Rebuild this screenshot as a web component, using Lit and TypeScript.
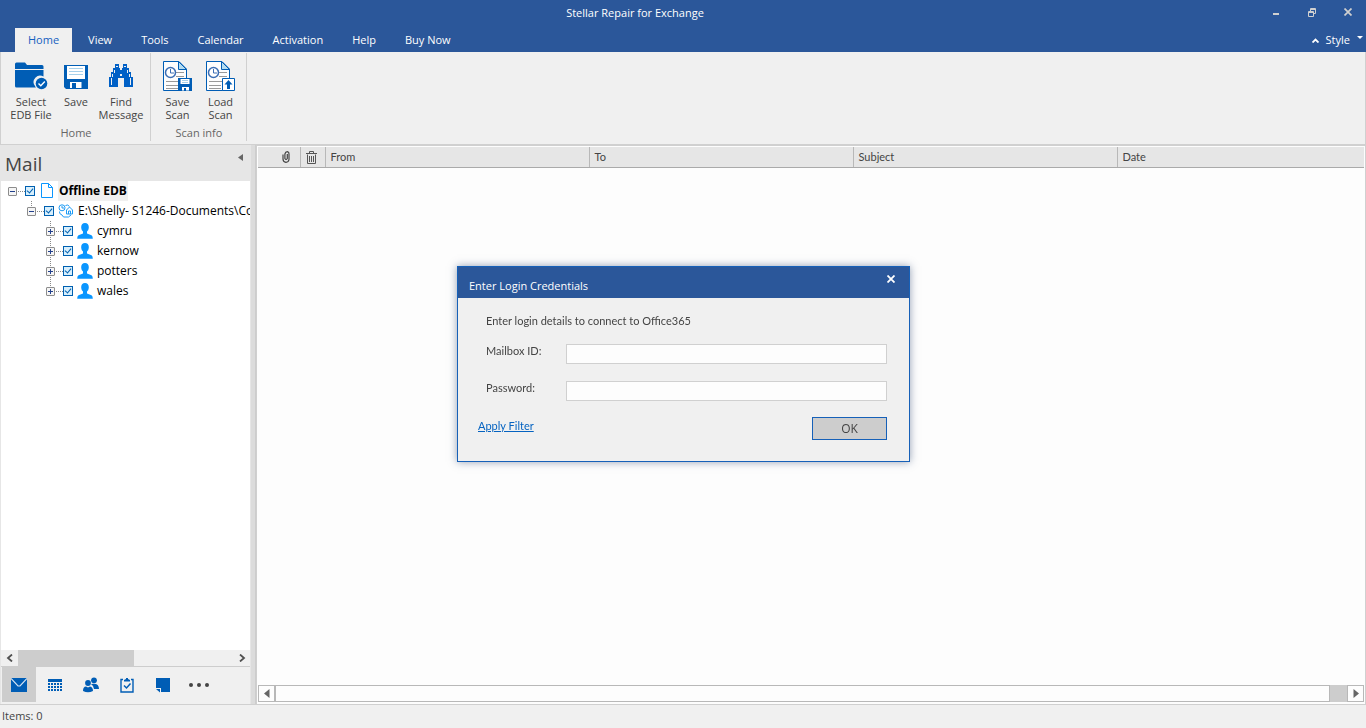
import { LitElement, html, css, svg, nothing, type TemplateResult } from "lit";
import { customElement, property, state } from "lit/decorators.js";
import { classMap } from "lit/directives/class-map.js";

const folderIcon = html`<svg width="34" height="30" viewBox="0 0 34 30" aria-hidden="true">
  <path fill="#005db5" d="M1 3q0-1.500 1.500-1.500H11L13 4H28q1.500 0 1.500 1.500V8H1zM1 9H29.500V15.500A6.500 6.500 0 0 0 21 25q.500 1 1 1.500H2.500Q1 26.500 1 25z"/>
  <circle cx="27.500" cy="22.500" r="5.800" fill="#005db5"/>
  <path d="M24.500 22.500l2.300 2.300 4-4.300" fill="none" stroke="#fff" stroke-width="1.400"/></svg>`;

const saveIcon = html`<svg width="24" height="26" viewBox="0 -2 24 26" aria-hidden="true">
  <path fill="#005db5" d="M0 0H24V24H2L0 22z"/>
  <path fill="#fff" d="M3 1H21V14H3zM6 17H17.500V23H12V18H8V23H6z"/>
  <path stroke="#a6d0ea" d="M5 3.500H19M5 6.500H19M5 9.500H19"/></svg>`;

const binocularsIcon = html`<svg width="24" height="24" viewBox="0 0 24 24" shape-rendering="crispEdges" aria-hidden="true">
  <path fill="#0060c6" d="M6 0H10V4H11V6H13V4H14V0H18V4H20V8H22V13H24V23H15V14H9V23H0V13H2V8H4V4H6z"/>
  <path fill="#f0f0f0" d="M7 2H9V3H7zM15 2H17V3H15zM5 6H6V9H5zM18 6H19V9H18zM3 10H4V13H3zM20 10H21V13H20zM11 10H13V12H11zM2 14H3V21H2zM21 14H22V21H21z"/></svg>`;

const scanIcon = (badge: unknown) => html`<svg width="31" height="31" viewBox="0 0 31 31" aria-hidden="true">
  <path fill="#fdfdfd" stroke="#005db5" d="M1.500.500H17L24.500 8V29.500H1.500z"/>
  <path fill="#b4dcf0" stroke="#005db5" d="M16.500.500V8.500H24.500z"/>
  <path stroke="#999" d="M14 11.500H22M14 15.500H22M4 20.500H22M4 24.500H16M4 27.500H16"/>
  <circle cx="8.500" cy="11.500" r="5" fill="#fff" stroke="#3c6eb4" stroke-width="1.500"/>
  <path fill="none" stroke="#3c6eb4" d="M8.500 8V12H12"/>${badge}</svg>`;

const saveBadge = svg`<path fill="#005db5" d="M16 17H30V30H17L16 29z"/>
  <path fill="#fff" d="M18.500 18H27.500V23H18.500zM20 26H27V29.500H24V27H22V29.500H20z"/>
  <path stroke="#a6d0ea" d="M20 19.500H26M20 21.500H26"/>`;
const loadBadge = svg`<path fill="#fff" stroke="#005db5" d="M17.500 17.500H29.500V29.500H17.500z"/>
  <path fill="#005db5" d="M23.500 19L27.500 23.500H25V28H22V23.500H19.500z"/>`;

const pageIcon = html`<svg width="14" height="16" viewBox="0 0 14 16" aria-hidden="true">
  <path d="M1.500.500H8.500L12.500 4.500V14.500H1.500zM8.500.500V4.500H12.500" fill="#fff" stroke="#0a96ff"/></svg>`;

const databaseIcon = html`<svg width="16" height="14" viewBox="0 0 16 14" aria-hidden="true">
  <g fill="none" stroke="#1e9bf5"><circle cx="4" cy="3.800" r="3"/><path d="M4 2V4H6M7.500 1.500q2.500-1.500 4 1M1.500 7.500Q1 10 4 11L5.500 13H10.500L13 11"/>
  <path d="M8.500 6L11.500 3 14.500 6V10H8.500zM10.500 10V7H12.500V10"/></g></svg>`;

const personIcon = html`<svg width="16" height="16" viewBox="0 0 16 16" aria-hidden="true">
  <path fill="#0a96ff" d="M8 0C10.500 0 12 1.800 11.800 4.500 11.700 6.500 11 7.500 10 8.500V10.500L14.500 12.300Q15.800 13 15.800 15.800H.200Q.200 13 1.500 12.300L6 10.500V8.500C5 7.500 4.300 6.500 4.200 4.500 4 1.800 5.500 0 8 0z"/></svg>`;

const navIcons: { name: string; icon: TemplateResult }[] = [
  { name: "Mail", icon: html`<svg width="16" height="16" viewBox="0 0 16 16" aria-hidden="true"><path fill="#005db5" d="M0 1H16V15H0z"/><path fill="none" stroke="#d8e6f4" stroke-width="1.100" d="M0 1.500L7 9H9L16 1.500"/></svg>` },
  { name: "Calendar", icon: html`<svg width="16" height="16" viewBox="0 0 16 16" aria-hidden="true"><path fill="#005db5" d="M1 2H15V5H1zM1 6H15V14H1z"/><path stroke="#f0f0f0" d="M3.500 6V14M6.500 6V14M9.500 6V14M12.500 6V14M1 8.500H15M1 11.500H15"/></svg>` },
  { name: "People", icon: html`<svg width="18" height="16" viewBox="0 0 18 16" aria-hidden="true"><g fill="#005db5"><circle cx="12" cy="3.300" r="2.900"/><path d="M9 7Q17 5.500 17 12H12Q11.500 8.500 9 7z"/><circle cx="6" cy="6" r="2.900"/><path d="M1 14Q1 9.500 4 9.500L6 10.500 8 9.500Q11 10 11 14Q6 16.500 1 14z"/></g></svg>` },
  { name: "Tasks", icon: html`<svg width="16" height="16" viewBox="0 0 16 16" aria-hidden="true"><path fill="none" stroke="#005db5" stroke-width="1.400" d="M4 2.500H2V15H14V2.500H12"/><path fill="#005db5" d="M5 4.500V3L7 2V1H9V2L11 3V4.500z"/><path fill="none" stroke="#005db5" stroke-width="1.500" d="M5 8.500L7.500 11 11.500 6.500"/></svg>` },
  { name: "Notes", icon: html`<svg width="16" height="16" viewBox="0 0 16 16" aria-hidden="true"><path fill="#005db5" d="M1 1H15V15H6V11H1z"/><path fill="#005db5" d="M1 12H5V15.500z"/></svg>` },
  { name: "More", icon: html`<svg width="22" height="16" viewBox="0 0 22 16" aria-hidden="true"><g fill="#444"><circle cx="3" cy="8" r="2"/><circle cx="11" cy="8" r="2"/><circle cx="19" cy="8" r="2"/></g></svg>` },
];

const clipIcon = html`<svg width="8" height="12" viewBox="0 0 8 12" role="img" aria-label="Attachment"><path fill="none" stroke="#444" stroke-width="1.200" d="M5.300 3V7.500Q4 9.500 2.900 7.500V3Q3.500.600 5.300.600 7.200 1 7 3V8.500Q6.500 11.300 4 11.300 1 11 1 8V3.500"/></svg>`;
const trashIcon = html`<svg width="12" height="13" viewBox="0 0 12 13" role="img" aria-label="Deleted"><path fill="none" stroke="#555" d="M1.500 3.500V12.500H9.500V3.500M0 2.500H11M3.500 2.500V.500H7.500V2.500M3.500 5V11M5.500 5V11M7.500 5V11"/></svg>`;

interface Node {
  label: string;
  icon: TemplateResult;
  open?: boolean;
  children?: Node[];
}

@customElement("ribbon-group")
class RibbonGroup extends LitElement {
  @property() caption = "";
  static styles = css`
    :host { display: flex; flex-direction: column; border-right: 1px solid #d0d0d0; padding: 4px 4px 0 5px; }
    .row { display: flex; flex: 1; justify-content: center; }
    .caption { text-align: center; color: #666; line-height: 16px; }
  `;
  render() {
    return html`<div class="row"><slot></slot></div><div class="caption">${this.caption}</div>`;
  }
}

@customElement("h-scroll")
class HScroll extends LitElement {
  @property({ type: Boolean, reflect: true }) framed = false;
  static styles = css`
    :host { display: flex; height: 16px; background: #f0f0f0; }
    button { border: 0; padding: 0; background: none; width: 17px; display: grid; place-items: center; }
    .track { flex: 1; display: flex; }
    .thumb { width: 116px; background: #cdcdcd; }
    :host([framed]) { background: #cdcdcd; height: 17px; }
    :host([framed]) button { border: 1px solid #b8b8b8; background: #fdfdfd; }
    :host([framed]) .track { padding-right: 17px; }
    :host([framed]) .thumb { flex: 1; background: #fdfdfd; border: 1px solid #b8b8b8; }
  `;
  render() {
    const arrow = (left: boolean) => this.framed
      ? html`<svg width="6" height="9" viewBox="0 0 6 9" aria-hidden="true"><path fill="#666" d=${left ? "M5.500 0V9L0 4.500z" : "M.500 0V9L6 4.500z"} /></svg>`
      : html`<svg width="8" height="8" viewBox="0 0 8 8" aria-hidden="true"><path fill="none" stroke="#505050" stroke-width="1.800" d=${left ? "M6 .500L2 4 6 7.500" : "M2 .500L6 4 2 7.500"} /></svg>`;
    return html`<button aria-label="Scroll left">${arrow(true)}</button>
      <div class="track"><div class="thumb"></div></div>
      <button aria-label="Scroll right">${arrow(false)}</button>`;
  }
}

@customElement("login-dialog")
class LoginDialog extends LitElement {
  static styles = css`
    :host { display: block; width: 451px; border: 1px solid #1660b8; background: #f0f0f0; color: #444;
      box-shadow: 0 0 8px rgba(43, 67, 110, 0.5); font: 12px/16px "Open Sans", sans-serif; }
    header { display: flex; justify-content: space-between; height: 31px; background: #2b579a; color: #fff; font-size: 11px; }
    h2 { margin: 0; padding: 11px 0 0 11px; font-size: 11px; font-weight: 400; line-height: 16px; }
    .close { border: 0; padding: 0; margin: 4px 10px 0 0; width: 16px; height: 16px; background: none; display: grid; place-items: center; }
    form { padding: 15px 22px 21px 20px; }
    .text { font-family: Lato, sans-serif; font-size: 11px; }
    p { margin: 0 0 15px 8px; line-height: 16px; }
    .field { display: flex; align-items: flex-start; margin: 0 0 17px 8px; }
    .field + .field { margin-bottom: 16px; }
    label { width: 80px; line-height: 14px; }
    input { flex: 1; min-width: 0; box-sizing: border-box; height: 20px; border: 1px solid #d0d0d0; background: #fdfdfd; padding: 0 4px; font: inherit; }
    .foot { display: flex; justify-content: space-between; align-items: flex-start; }
    a { color: #0563c1; line-height: 18px; }
    .ok { width: 75px; height: 23px; padding: 0; border: 1px solid #1660b8; background: #cdcdcd; color: #444; font: 12px "Open Sans", sans-serif; }
  `;
  render() {
    return html`<section role="dialog" aria-labelledby="title">
      <header><h2 id="title">Enter Login Credentials</h2>
        <button class="close" aria-label="Close"><svg width="8" height="8" viewBox="0 0 8 8" aria-hidden="true"><path stroke="#fff" stroke-width="1.800" d="M.500.500L7.500 7.500M7.500.500L.500 7.500"/></svg></button>
      </header>
      <form @submit=${(e: Event) => e.preventDefault()}>
        <p class="text">Enter login details to connect to Office365</p>
        <div class="field"><label class="text" for="mailbox">Mailbox ID:</label><input id="mailbox" type="text"></div>
        <div class="field"><label class="text" for="password">Password:</label><input id="password" type="password"></div>
        <div class="foot"><a class="text" href="#filter">Apply Filter</a><button class="ok">OK</button></div>
      </form>
    </section>`;
  }
}

@customElement("app-root")
class AppRoot extends LitElement {
  @state() private tab = "Home";

  private tabs = ["Home", "View", "Tools", "Calendar", "Activation", "Help", "Buy Now"];
  private tree: Node = {
    label: "Offline EDB", icon: pageIcon, open: true,
    children: [{
      label: "E:\\Shelly- S1246-Documents\\Co", icon: databaseIcon, open: true,
      children: ["cymru", "kernow", "potters", "wales"].map((label) => ({ label, icon: personIcon })),
    }],
  };

  static styles = css`
    :host { display: flex; flex-direction: column; height: 100vh; overflow: hidden; background: #f0f0f0; color: #444; font: 11px/16px "Open Sans", sans-serif; }
    button { font: inherit; color: inherit; border: 0; padding: 0; background: none; }
    .top { background: #2b579a; color: #fff; height: 52px; display: flex; flex-direction: column; }
    .title { display: grid; grid-template-columns: 1fr auto 1fr; height: 28px; }
    h1 { margin: 0; padding: 5px 0 0; font-size: 11px; font-weight: 400; line-height: 16px; grid-column: 2; margin-right: 96px; }
    .window { justify-self: end; display: flex; }
    .window button { width: 36px; height: 24px; display: grid; place-items: center; }
    .tabs { display: flex; padding-left: 15px; flex: 1; gap: 3px; }
    .tab { padding: 0 13px; }
    .tab.active { background: #f0f0f0; color: #1660c0; }
    .style { margin-left: auto; padding-right: 3px; display: flex; gap: 7px; align-items: center; }
    .ribbon { display: flex; height: 88px; padding: 1px 0 3px; border: 1px solid #d0d0d0; border-top: 0; }
    .tool { display: flex; flex-direction: column; align-items: center; line-height: 13px; width: 43px; }
    .tool.wide { width: 50px; }
    .tool.save { width: 40px; }
    .pic { height: 38px; display: grid; place-items: center; }
    .main { flex: 1; min-height: 0; display: flex; background: #e6e6e6; border-bottom: 1px solid #d0d0d0; }
    .side { width: 249px; flex: none; display: flex; flex-direction: column; border-left: 1px solid #e6e6e6; }
    .mail { height: 36px; flex: none; display: flex; justify-content: space-between; padding: 0 7px 0 4px; }
    h2 { margin: 0; font-size: 19px; line-height: 38px; font-weight: 400; }
    .collapse { height: 24px; }
    .tree { flex: 1; background: #fff; overflow: hidden; padding-left: 7px; color: #000; font-size: 12px; }
    ul { list-style: none; margin: 0; padding: 0; }
    ul ul { padding-left: 19px; }
    ul ul > li { background: repeating-linear-gradient(#888 0 1px, transparent 1px 2px) 4px 0 / 1px 100% no-repeat; }
    ul ul > li:last-child { background-size: 1px 10px; }
    .node { display: flex; align-items: center; height: 20px; white-space: nowrap; }
    .toggle { width: 9px; height: 9px; flex: none; box-sizing: border-box; border: 1px solid #8c8c8c; border-radius: 1px; background: #f5f5f5; display: grid; place-items: center; }
    .dots { width: 8px; height: 1px; flex: none; background: repeating-linear-gradient(90deg, transparent 0 1px, #888 1px 2px); }
    .check { appearance: none; flex: none; margin: 0; width: 10px; height: 10px; border: 1px solid #0060b0; background: #d8effc; display: grid; place-items: center; box-sizing: border-box; }
    .check:checked::after { content: ""; width: 3px; height: 5px; border: solid #0060b0; border-width: 0 1px 1px 0; transform: rotate(40deg); margin-bottom: 2px; }
    .glyph { width: 16px; height: 16px; flex: none; margin-left: 4px; display: grid; place-items: center; }
    .label { padding: 0 1px; margin-left: 3px; line-height: 20px; }
    .root { font-weight: 700; background: #f0f0f0; }
    .nav { display: flex; height: 38px; flex: none; border-top: 1px solid #cdcdcd; background: #f0f0f0; padding-left: 1px; gap: 2px; box-sizing: border-box; }
    .nav button { width: 34px; height: 35px; display: grid; place-items: center; }
    .nav .current { background: #cdcdcd; }
    .split { width: 6px; flex: none; background: #dcdcdc; border-left: 1px solid #e6e6e6; border-right: 1px solid #cdcdcd; box-sizing: border-box; }
    .list { flex: 1; min-width: 0; display: flex; flex-direction: column; background: #fdfdfd; border: 1px solid #d0d0d0; border-bottom: 0; padding: 1px 1px 2px 1px; }
    .grid { flex: 1; }
    table { width: 100%; border-collapse: collapse; table-layout: fixed; }
    th { background: #e6e6e6; height: 20px; padding: 1px 5px 0; box-sizing: border-box; border-bottom: 1px solid #aaa; border-right: 1px solid #b8b8b8; text-align: left; font: 11px/16px Lato, sans-serif; }
    th:last-child { border-right: 0; }
    th svg { display: block; }
    .attach { width: 42px; padding-left: 24px; }
    .deleted { width: 25px; }
    .wide-col { width: 264px; }
    .status { height: 23px; flex: none; padding-left: 2px; line-height: 22px; }
    .overlay { position: fixed; inset: 0; display: grid; place-items: center; pointer-events: none; padding-left: 1px; }
    login-dialog { pointer-events: auto; }
  `;

  private node(n: Node, root = false): TemplateResult {
    const sign = n.open ? "M0 2.500H5" : "M0 2.500H5M2.500 0V5";
    return html`<li><div class="node">
        <button class="toggle" aria-label="Toggle ${n.label}"><svg width="5" height="5" viewBox="0 0 5 5" aria-hidden="true"><path stroke="#22408c" d=${sign} /></svg></button>
        <span class="dots"></span>
        <input class="check" type="checkbox" checked aria-label=${n.label}>
        <span class="glyph">${n.icon}</span><span class=${classMap({ label: true, root })}>${n.label}</span>
      </div>${n.children ? html`<ul>${n.children.map((c) => this.node(c))}</ul>` : nothing}</li>`;
  }

  private tool(icon: unknown, first: string, second = "", kind = "") {
    return html`<button class="tool ${kind}"><span class="pic">${icon}</span><span>${first}</span><span>${second}</span></button>`;
  }

  render() {
    return html`
      <header class="top">
        <div class="title"><h1>Stellar Repair for Exchange</h1>
          <div class="window">
            <button aria-label="Minimize"><svg width="8" height="8" viewBox="0 0 8 8"><path stroke="#d0d0d0" stroke-width="2" d="M1 6H7"/></svg></button>
            <button aria-label="Restore"><svg width="8" height="9" viewBox="0 0 8 9"><path fill="none" stroke="#d0d0d0" d="M2.500 3V.500H7.500V5.500H5.500M.500 3.500H5.500V8.500H.500zM2 1.500H8M0 4.500H6"/></svg></button>
            <button aria-label="Close"><svg width="8" height="8" viewBox="0 0 8 8"><path stroke="#d0d0d0" stroke-width="1.700" d="M.500.500L7.500 7.500M7.500.500L.500 7.500"/></svg></button>
          </div>
        </div>
        <nav class="tabs">
          ${this.tabs.map((t) => html`<button class=${classMap({ tab: true, active: t === this.tab })} @click=${() => (this.tab = t)}>${t}</button>`)}
          <button class="style"><svg width="7" height="5" viewBox="0 0 7 5" aria-hidden="true"><path fill="none" stroke="#fff" stroke-width="1.800" d="M.500 4.500L3.500 1.500 6.500 4.500"/></svg>Style<svg width="6" height="8" viewBox="0 0 6 8" aria-hidden="true"><path fill="#fff" d="M0 0H6L3 3z"/></svg></button>
        </nav>
      </header>
      <div class="ribbon">
        <ribbon-group caption="Home">
          ${this.tool(folderIcon, "Select", "EDB File", "wide")}${this.tool(saveIcon, "Save", "", "save")}${this.tool(binocularsIcon, "Find", "Message", "wide")}
        </ribbon-group>
        <ribbon-group caption="Scan info">
          ${this.tool(scanIcon(saveBadge), "Save", "Scan")}${this.tool(scanIcon(loadBadge), "Load", "Scan")}
        </ribbon-group>
      </div>
      <main class="main">
        <aside class="side">
          <div class="mail"><h2>Mail</h2><button class="collapse" aria-label="Collapse"><svg width="5" height="7" viewBox="0 0 5 7"><path fill="#666" d="M5 0V7L0 3.500z"/></svg></button></div>
          <div class="tree"><ul>${this.node(this.tree, true)}</ul></div>
          <h-scroll></h-scroll>
          <nav class="nav">${navIcons.map((n, i) => html`<button class=${classMap({ current: i === 0 })} aria-label=${n.name}>${n.icon}</button>`)}</nav>
        </aside>
        <div class="split"></div>
        <section class="list">
          <div class="grid"><table><thead><tr>
            <th class="attach">${clipIcon}</th><th class="deleted">${trashIcon}</th>
            <th class="wide-col">From</th><th class="wide-col">To</th><th class="wide-col">Subject</th><th>Date</th>
          </tr></thead></table></div>
          <h-scroll framed></h-scroll>
        </section>
      </main>
      <footer class="status">Items: 0</footer>
      <div class="overlay"><login-dialog></login-dialog></div>`;
  }
}
